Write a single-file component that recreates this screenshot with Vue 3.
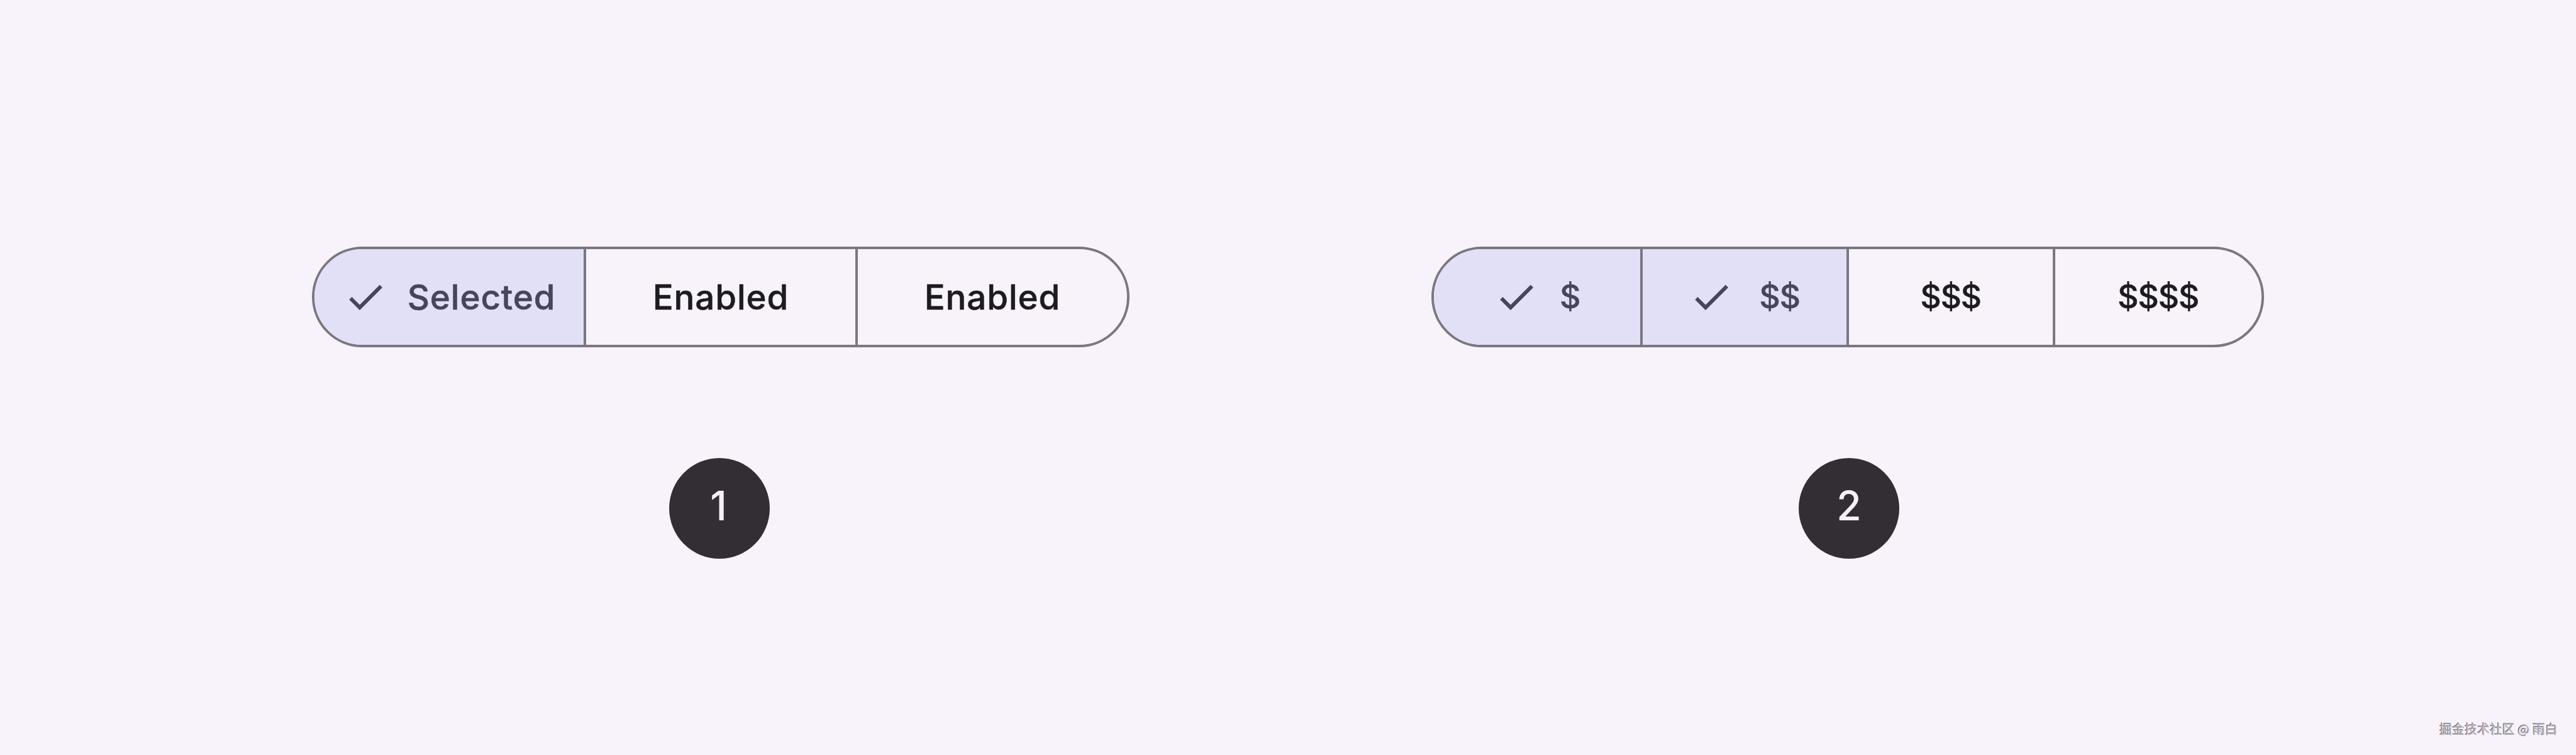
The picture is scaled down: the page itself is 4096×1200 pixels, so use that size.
<template>
  <main class="page">
    <section v-for="group in groups" :key="group.id" class="group" :class="group.name">
      <div class="segmented">
        <div
          v-for="(item, i) in group.items"
          :key="i"
          class="segment"
          :class="{ selected: item.selected, price: group.name === 'prices' }"
        >
          <svg v-if="item.selected" class="check" viewBox="0 0 24 24">
            <path d="M9 16.17 4.83 12l-1.42 1.41L9 19 21 7l-1.41-1.41z" />
          </svg>
          <span class="label">{{ item.label }}</span>
        </div>
      </div>
      <div class="badge"><span class="num">{{ group.id }}</span></div>
    </section>
    <div class="watermark">掘金技术社区 @ 雨白</div>
  </main>
</template>

<script setup>
const groups = [
  {
    id: 1,
    name: 'states',
    items: [
      { label: 'Selected', selected: true },
      { label: 'Enabled' },
      { label: 'Enabled' },
    ],
  },
  {
    id: 2,
    name: 'prices',
    items: [
      { label: '$', selected: true },
      { label: '$$', selected: true },
      { label: '$$$' },
      { label: '$$$$' },
    ],
  },
];
</script>

<style>
body {
  margin: 0;
  background: #f8f3fa;
}
</style>

<style scoped>
.page {
  position: relative;
  display: flex;
  align-items: flex-start;
  gap: 480px;
  box-sizing: border-box;
  width: 4096px;
  height: 1200px;
  padding: 392px 496px 0;
  overflow: hidden;
  background: #f8f3fa;
  font-family: Inter, "Liberation Sans", sans-serif;
}

.group {
  display: flex;
  flex-direction: column;
  align-items: center;
  gap: 176px;
}

.segmented {
  display: flex;
  box-sizing: border-box;
  width: 1300px;
  height: 160px;
  border: 4px solid #7b7680;
  border-radius: 80px;
  overflow: hidden;
}

.prices .segmented {
  width: 1324px;
}

.segment {
  display: flex;
  align-items: center;
  justify-content: center;
  gap: 31px;
  color: #1d1b20;
  font-size: 54.6px;
  font-weight: 500;
  line-height: 72px;
  letter-spacing: 0.9px;
  -webkit-text-stroke: 0.5px currentColor;
}

.states .segment {
  flex: 0 0 432px;
  box-sizing: border-box;
}

.states .segment:first-child {
  flex-basis: 428px;
}

.segment + .segment {
  border-left: 4px solid #7b7680;
}

.segment.selected {
  background: #e1e0f6;
  color: #46455c;
}

.price {
  flex: 0 0 324px;
  gap: 33px;
  font-size: 52px;
  letter-spacing: -1.4px;
  -webkit-text-stroke-width: 0.3px;
}

/* evens out the tight tracking after the last sign */
.price .label {
  padding-right: 1px;
}

.price:first-child,
.price:last-child {
  flex-basis: 328px;
}

.price:nth-child(2) {
  gap: 40px;
}

.check {
  flex: none;
  width: 72px;
  height: 72px;
  fill: currentColor;
}

.badge {
  display: flex;
  align-items: center;
  justify-content: center;
  width: 160px;
  height: 160px;
  margin-right: 4px;
  border-radius: 50%;
  background: #332e34;
  color: #f5eff7;
  font-size: 64px;
  font-weight: 500;
  line-height: 72px;
}

.num {
  padding: 0 3px 8px 0;
}

.prices .badge {
  margin: 0 0 0 4px;
}

.prices .num {
  padding-right: 0;
}

/* embossed credit in the corner */
.watermark {
  position: absolute;
  right: 29px;
  bottom: 27px;
  color: #c4bfc7;
  font-family: "Noto Sans CJK SC", sans-serif;
  font-size: 20px;
  line-height: 28px;
  white-space: nowrap;
  text-shadow: -1px -1px 0 #6a666e;
}
</style>
